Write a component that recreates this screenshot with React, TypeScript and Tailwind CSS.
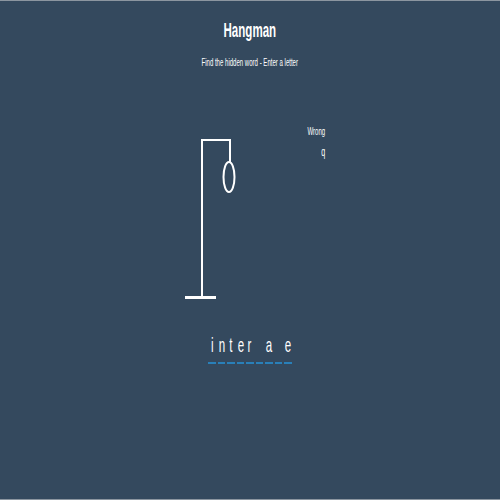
import React from "react";

const word = ["i", "n", "t", "e", "r", "", "a", "", "e"];

export default function App() {
  return (
    <div
      className="w-[500px] h-[500px] bg-[#34495e] border-t border-b border-[#8c96a0] flex flex-col items-center text-white overflow-hidden"
      style={{ fontFamily: '"Liberation Sans", Arial, sans-serif' }}
    >
      <h1 className="mt-[18px] h-[21px] text-[21px] leading-none font-bold scale-x-[0.55] origin-center whitespace-nowrap">
        Hangman
      </h1>
      <p className="mt-[17px] h-[11px] text-[11px] leading-none scale-x-[0.55] origin-center whitespace-nowrap">
        Find the hidden word - Enter a letter
      </p>

      <div className="mt-[57px] w-full flex pl-[183px] h-[180px]">
        <svg width="60" height="180" viewBox="0 0 60 180" fill="none" stroke="#ffffff">
          <line x1="19" y1="14" x2="19" y2="172" strokeWidth="2" />
          <line x1="18" y1="15" x2="48" y2="15" strokeWidth="2" />
          <line x1="47" y1="15" x2="47" y2="37" strokeWidth="2" />
          <ellipse cx="46" cy="52" rx="5.5" ry="15" strokeWidth="2" />
          <line x1="2" y1="172.5" x2="33" y2="172.5" strokeWidth="3" />
        </svg>
        <div className="w-[82px] flex flex-col items-end pt-[1px]">
          <p className="h-[11px] text-[11px] leading-none scale-x-[0.55] origin-right whitespace-nowrap">
            Wrong
          </p>
          <span className="mt-[8px] h-[13px] text-[13px] leading-none scale-x-[0.55] origin-right">
            q
          </span>
        </div>
      </div>

      <div className="mt-[29px] flex gap-[2.2px]">
        {word.map((l, i) => (
          <div key={i} className="w-[7.3px] flex flex-col items-center">
            <span className="h-[21px] text-[21px] leading-none scale-x-[0.55] origin-center whitespace-nowrap">
              {l || "\u00a0"}
            </span>
            <div className="mt-[7px] w-[7.3px] h-[2px] bg-[#2980b9]" />
          </div>
        ))}
      </div>
    </div>
  );
}
